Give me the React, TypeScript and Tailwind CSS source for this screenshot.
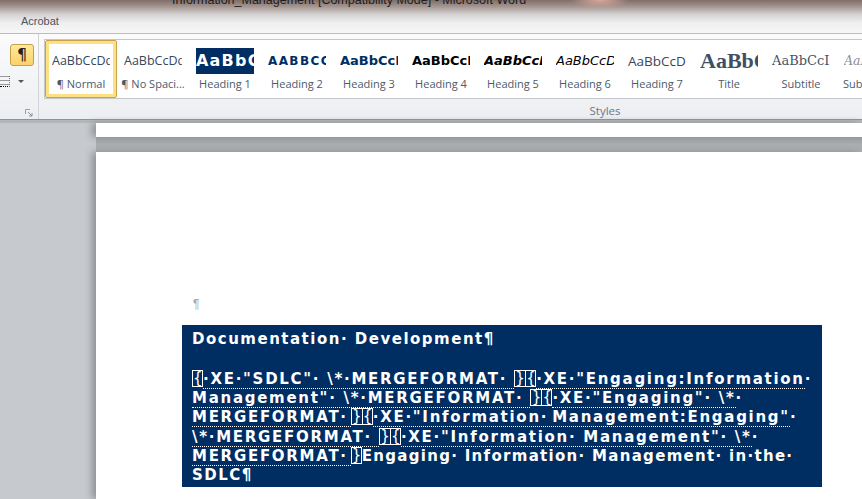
import React from 'react';

const styles = [
  { label: '¶ Normal', text: 'AaBbCcDdEe', cls: 'font-["Open_Sans"] text-[12.5px] text-[#3a4656]', active: true },
  { label: '¶ No Spaci...', text: 'AaBbCcDdEe', cls: 'font-["Open_Sans"] text-[12.5px] text-[#3a4656]' },
  { label: 'Heading 1', text: 'AaBbCcDd', cls: 'font-["DejaVu_Sans"] font-bold text-[16px] tracking-[1.2px] text-white bg-[#002d62]' },
  { label: 'Heading 2', text: 'AABBCCDD', cls: 'font-["DejaVu_Sans"] font-bold text-[12px] tracking-[1.4px] text-[#002d62]' },
  { label: 'Heading 3', text: 'AaBbCcDd', cls: 'font-["DejaVu_Sans"] font-bold text-[13px] text-[#002d62]' },
  { label: 'Heading 4', text: 'AaBbCcDd', cls: 'font-["DejaVu_Sans"] font-bold text-[13px] text-black' },
  { label: 'Heading 5', text: 'AaBbCcDd', cls: 'font-["DejaVu_Sans"] font-bold italic text-[13px] text-black' },
  { label: 'Heading 6', text: 'AaBbCcDdEe', cls: 'font-["DejaVu_Sans"] italic text-[13px] text-black' },
  { label: 'Heading 7', text: 'AaBbCcDdEe', cls: 'font-["Open_Sans"] text-[13.5px] text-[#3a4656]' },
  { label: 'Title', text: 'AaBbCcDd', cls: 'font-["Liberation_Serif"] font-bold text-[22px] text-[#3f5065]' },
  { label: 'Subtitle', text: 'AaBbCcIi', cls: 'font-["DejaVu_Serif"] text-[13px] text-[#4a5464]' },
  { label: 'Subtle Em...', text: 'AaBbCcDd', cls: 'font-["DejaVu_Serif"] italic text-[12.5px] text-[#8a8f96]' },
];

// field brace boxes shown by Word when field codes are on
const Field = ({ chars }: { chars: string[] }) => (
  <span className="inline-flex h-[17px] align-[1px] font-normal leading-[15px] text-[15px] tracking-normal">
    {chars.map((c, i) => (
      <span key={i} className="inline-block w-[11px] border border-white text-center first:border-r-0 last:border-r only:border">
        {c}
      </span>
    ))}
  </span>
);

const Hidden = ({ children, className = '' }: { children: React.ReactNode; className?: string }) => (
  <span className={`border-b border-dotted border-white tracking-[1.72px] ${className}`}>{children}</span>
);

const Line = ({ children }: { children: React.ReactNode }) => <div className="h-[19.33px]">{children}</div>;

export default function App() {
  return (
    <div className="h-[499px] w-[862px] overflow-hidden bg-[#c6c9cd] font-['Liberation_Sans',sans-serif]">
      {/* title bar and tab strip */}
      <div className="h-[33px] overflow-hidden bg-[radial-gradient(ellipse_30px_9px_at_600px_0px,#d9a99b,transparent),linear-gradient(#7f6e68_0%,#a0918c_18%,#d2cfcf_42%,#eeeeef_68%,#f7f7f8_100%)]">
        <div className="h-[14px] -mt-[7px] pl-[172px] text-[12.5px] leading-[14px] text-[#1d1d1d] whitespace-nowrap">
          Information_Management [Compatibility Mode] - Microsoft Word
        </div>
        <div className="mt-[7px] pl-[21px] text-[11px] leading-[14px] text-[#4b5563]">Acrobat</div>
      </div>

      {/* ribbon */}
      <div className="h-[87px] flex bg-gradient-to-b from-[#fbfbfc] to-[#eceef1] border-t border-b border-t-[#b9bcc0] border-b-[#8e9296]">
        <div className="w-[38px] shrink-0 flex flex-col items-end pt-[10px] relative">
          <div className="mr-[4px] h-[22px] w-[24px] rounded-[3px] border border-[#c2a04e] bg-gradient-to-b from-[#fde999] to-[#fbd268] flex items-center justify-center text-[16px] leading-none font-['DejaVu_Sans'] text-[#222]">
            ¶
          </div>
          <div className="mt-[10px] w-full flex items-center gap-[8px]">
            <div className="h-[11px] w-[10px] border-b border-black border-r border-dotted border-r-[#777] bg-[linear-gradient(#999_1px,transparent_1px)] bg-[length:3px_4px]" />
            <div className="w-0 h-0 border-x-[3px] border-x-transparent border-t-[3px] border-t-[#555]" />
          </div>
          <svg className="absolute left-[25px] top-[75px]" width="8" height="8" viewBox="0 0 8 8" fill="none">
            <path d="M0.5 5V0.5H5" stroke="#9aa0a6" />
            <path d="M3 3L7 7M7 4v3H4" stroke="#8b9198" />
          </svg>
        </div>
        <div className="w-[6px] shrink-0 border-l border-[#d2d4d7]" />
        <div className="flex-1 min-w-0 flex flex-col">
          <div className="mt-[5px] h-[60px] bg-white border-y border-l border-[#c4c7cb] flex overflow-hidden">
            {styles.map((s) => (
              <div
                key={s.label}
                className={
                  s.active
                    ? 'w-[72px] shrink-0 flex flex-col items-center rounded-[2px] border-[1px] border-[#c9a24f] ring-[3px] ring-inset ring-[#fde07f] pt-[7px]'
                    : 'w-[72px] shrink-0 flex flex-col items-center border border-transparent pt-[7px]'
                }
              >
                <div className="w-[58px] h-[26px] overflow-hidden">
                  <div className={`h-[26px] leading-[26px] whitespace-nowrap ${s.cls}`}>{s.text}</div>
                </div>
                <div className="mt-[3px] text-[11px] leading-[14px] text-[#4d5a6c] font-['Open_Sans'] whitespace-nowrap">{s.label}</div>
              </div>
            ))}
          </div>
          <div className="text-center text-[11.5px] leading-[14px] mt-[5px] text-[#6b7688] pl-[304px] font-['Open_Sans']">Styles</div>
        </div>
      </div>

      <div className="h-[3px] bg-[#b4b7ba]" />

      {/* document area */}
      <div className="pl-[96px]">
        <div className="h-[14px] bg-white [box-shadow:-4px_0_7px_#8f9295]" />
        <div className="h-[15px] bg-gradient-to-b from-[#97999c] via-[#abaeb0] to-[#abaeb0]" />
        <div className="h-[347px] bg-white pt-[144px] [box-shadow:-4px_0_7px_#8f9295]">
          <div className="pl-[97px] text-[12px] leading-[16px] text-[#a8a8a8]">¶</div>
          <div className="ml-[86px] mt-[13px] w-[640px] h-[162px] bg-[#002d62] pl-[10px] pt-[5px] text-white font-['DejaVu_Sans'] font-bold text-[15px] leading-[19.33px] tracking-[1.5px] whitespace-nowrap">
            <Line>Documentation· Development¶</Line>
            <div className="h-[20.33px]" />
            <Line>
              <Field chars={['{']} />
              <Hidden>·XE·"SDLC"· \*·MERGEFORMAT· </Hidden>
              <Field chars={['}', '{']} />
              <Hidden>·XE·"Engaging:Information</Hidden>·
            </Line>
            <Line>
              <Hidden>Management"· \*·MERGEFORMAT· </Hidden>
              <Field chars={['}', '{']} />
              <Hidden>·XE·"Engaging"· \*</Hidden>·
            </Line>
            <Line>
              <Hidden className="[word-spacing:-4px]">MERGEFORMAT· </Hidden>
              <Field chars={['}', '{']} />
              <Hidden className="[word-spacing:-3px]">·XE·"Information· Management:Engaging"</Hidden>·
            </Line>
            <Line>
              <Hidden>\*·MERGEFORMAT· </Hidden>
              <Field chars={['}', '{']} />
              <Hidden>·XE·"Information· Management"· \*</Hidden>·
            </Line>
            <Line>
              <Hidden className="[word-spacing:-4px]">MERGEFORMAT· </Hidden>
              <Field chars={['}']} />
              <span className="tracking-[1.3px]">Engaging· Information· Management· in·the·</span>
            </Line>
            <Line>SDLC¶</Line>
          </div>
        </div>
      </div>
    </div>
  );
}
